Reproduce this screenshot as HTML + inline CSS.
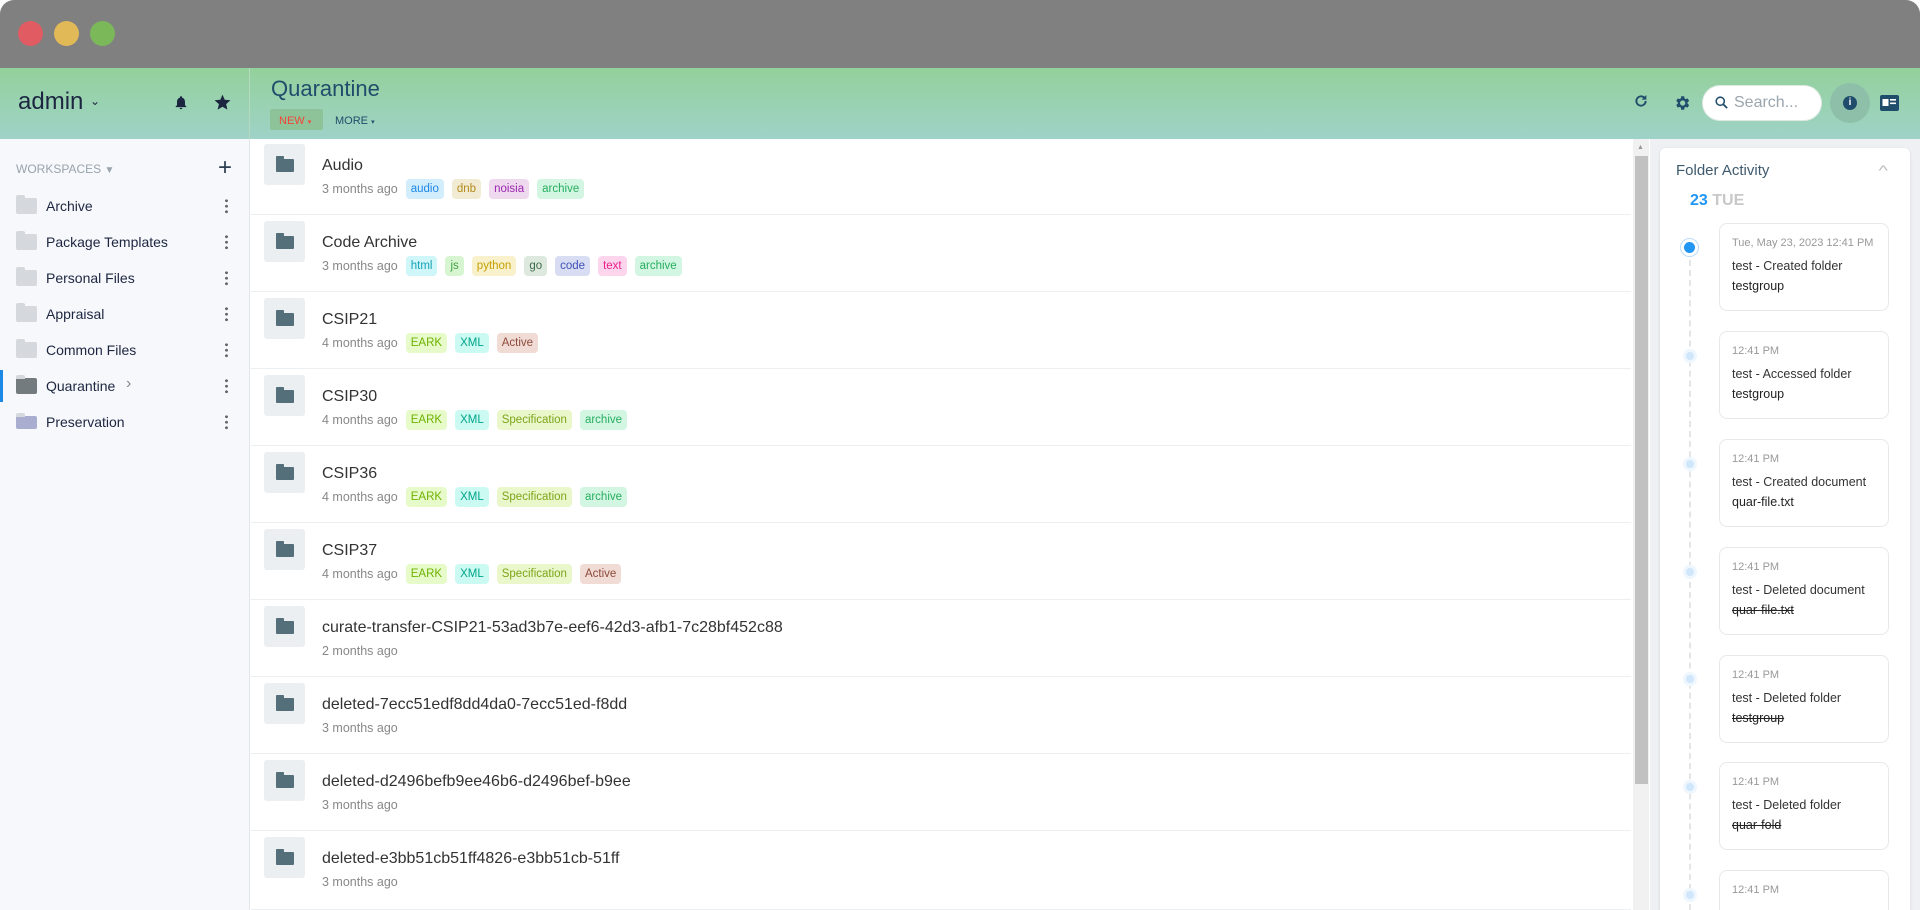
<!DOCTYPE html>
<html style="width:1920px;height:910px;overflow:hidden"><head><meta charset="utf-8"><style>
*{box-sizing:border-box;margin:0;padding:0}
body{width:1920px;height:910px;overflow:hidden;font-family:"Liberation Sans",sans-serif;background:#fff;position:relative;color:#333}
.abs{position:absolute}
.tb{left:0;top:0;width:1920px;height:68px;background:#808080;border-radius:14px 14px 0 0}
.dot{width:25px;height:25px;border-radius:50%;top:21px}
.hdr{left:0;top:68px;width:1920px;height:71px;background:linear-gradient(#93d19b,#9fd2c8)}
.side{left:0;top:139px;width:250px;height:771px;background:#f7f8fb;border-right:1px solid #e3e6ea}
.si{left:0;height:36px;width:250px;white-space:nowrap}
.si .fi{position:absolute;left:16px;top:10px;width:21px;height:16px;background:#d5d8dc;border-radius:2px}
.si .fi:before{content:"";position:absolute;left:0;top:-3px;width:9px;height:4px;background:#d5d8dc;border-radius:2px 2px 0 0}
.si span{position:absolute;left:46px;top:10px;font-size:14px;color:#1c2640}
.vd{position:absolute;left:225px;top:10px;width:3px;height:16px;background:radial-gradient(circle,#666 1.3px,transparent 1.6px) 0 0/3px 5.5px}
.row{left:251px;width:1380px;height:77px;border-bottom:1px solid #eceff2}
.row .ic{position:absolute;left:13px;top:6px;width:41px;height:41px;background:#eceff2;border-radius:3px}
.row .ic:after{content:"";position:absolute;left:12px;top:15px;width:18px;height:13px;background:#546e7a;border-radius:1px}
.row .ic:before{content:"";position:absolute;left:12px;top:12px;width:8px;height:4px;background:#546e7a;border-radius:1px 1px 0 0}
.row .t{position:absolute;left:71px;top:19px;font-size:16px;color:#333}
.row .s{position:absolute;left:71px;top:41px;font-size:12.5px;color:#888;display:flex;align-items:center;gap:8px;height:20px;white-space:nowrap}
.tag{font-size:11.5px;padding:0 5px;height:20px;line-height:20px;border-radius:4px}
.card{left:1719px;width:170px;background:#fff;border:1px solid #e6e8ea;border-radius:8px;height:88px}
.card .d{position:absolute;left:12px;top:13px;font-size:11px;color:#999}
.card .a{position:absolute;left:12px;top:35px;font-size:12.5px;color:#333}
.card .n{position:absolute;left:12px;top:55px;font-size:12.5px;color:#222}
.tl{left:1683px;width:14px;height:14px;border-radius:50%;background:#cfe6fb;border:3px solid #eef6fe}
</style></head><body>
<div class="abs tb"></div>
<div class="abs dot" style="left:18px;background:#e05c62"></div>
<div class="abs dot" style="left:54px;background:#e2b957"></div>
<div class="abs dot" style="left:90px;background:#7bb85a"></div>
<div class="abs hdr"></div>
<div class="abs" style="left:249px;top:68px;width:1px;height:71px;background:#b9d9bf"></div>
<div class="abs" style="left:18px;top:88px;font-size:24px;color:#1c2640">admin <span style="font-size:12px;vertical-align:4px">&#8964;</span></div>
<svg class="abs" style="left:173px;top:94px" width="16" height="17" viewBox="0 0 24 24"><path fill="#1c2640" d="M12 22a2 2 0 0 0 2-2h-4a2 2 0 0 0 2 2zm6-6V11c0-3.1-1.6-5.6-4.5-6.3V4a1.5 1.5 0 0 0-3 0v.7C7.6 5.4 6 7.9 6 11v5l-2 2v1h16v-1z"/></svg>
<svg class="abs" style="left:213px;top:93px" width="19" height="19" viewBox="0 0 24 24"><path fill="#1c2640" d="M12 17.3 18.2 21l-1.6-7L22 9.2l-7.2-.6L12 2 9.2 8.6 2 9.2 7.5 14l-1.7 7z"/></svg>
<div class="abs" style="left:271px;top:76px;font-size:22px;color:#1f4d6b">Quarantine</div>
<div class="abs" style="left:270px;top:109px;width:53px;height:21px;background:#8ec39a;border-radius:2px;font-size:11px;color:#f44336;padding:6px 0 0 9px;white-space:nowrap">NEW <span style="font-size:7px">▾</span></div>
<div class="abs" style="left:335px;top:115px;font-size:11px;color:#1f4d6b;white-space:nowrap">MORE <span style="font-size:7px">▾</span></div>
<svg class="abs" style="left:1633px;top:93px" width="16" height="16" viewBox="0 0 24 24"><path d="M19 12a7 7 0 1 1-2.1-5" fill="none" stroke="#1f4d6b" stroke-width="2.8"/><path d="M20 3v7h-7z" fill="#1f4d6b"/></svg>
<svg class="abs" style="left:1673px;top:94px" width="18" height="18" viewBox="0 0 24 24"><path fill="#1f4d6b" d="M19.4 13a7.5 7.5 0 0 0 0-2l2.1-1.6-2-3.5-2.5 1a7 7 0 0 0-1.7-1L14.9 3h-4l-.4 2.9a7 7 0 0 0-1.7 1l-2.5-1-2 3.5L6.4 11a7.5 7.5 0 0 0 0 2l-2.1 1.6 2 3.5 2.5-1a7 7 0 0 0 1.7 1l.4 2.9h4l.4-2.9a7 7 0 0 0 1.7-1l2.5 1 2-3.5zM12.9 15.5a3.5 3.5 0 1 1 0-7 3.5 3.5 0 0 1 0 7z"/></svg>
<div class="abs" style="left:1702px;top:85px;width:120px;height:36px;background:#fff;border-radius:18px;border:1px solid #dfe9e3"></div>
<svg class="abs" style="left:1714px;top:95px" width="15" height="15" viewBox="0 0 24 24"><circle cx="10" cy="10" r="6.5" fill="none" stroke="#1f4d6b" stroke-width="2.5"/><path d="M15 15l6 6" stroke="#1f4d6b" stroke-width="2.8"/></svg>
<div class="abs" style="left:1734px;top:94px;font-size:16px;color:#9aa5ad">Search...</div>
<div class="abs" style="left:1830px;top:83px;width:40px;height:40px;border-radius:50%;background:#8dbfa9"></div>
<div class="abs" style="left:1843px;top:96px;width:14px;height:14px;border-radius:50%;background:#1f4d6b;color:#fff;font-size:10px;font-weight:bold;text-align:center;line-height:14px">i</div>
<svg class="abs" style="left:1880px;top:95px" width="19" height="16" viewBox="0 0 19 16"><rect width="19" height="16" rx="2" fill="#1f4d6b"/><rect x="2.5" y="4" width="6" height="7" fill="#fff"/><rect x="10" y="4" width="6" height="1.6" fill="#fff"/><rect x="10" y="7.5" width="6" height="1.6" fill="#fff"/></svg>

<div class="abs side"></div>
<div class="abs" style="left:16px;top:162px;font-size:12px;color:#98a3ad">WORKSPACES <span style="font-size:10px">&#9660;</span></div>
<div class="abs" style="left:218px;top:154px;font-size:24px;color:#2c3e50;font-weight:300">+</div>
<div class="abs si" style="top:188px"><div class="fi"></div><span>Archive</span><div class="vd"></div></div>
<div class="abs si" style="top:224px"><div class="fi"></div><span>Package Templates</span><div class="vd"></div></div>
<div class="abs si" style="top:260px"><div class="fi"></div><span>Personal Files</span><div class="vd"></div></div>
<div class="abs si" style="top:296px"><div class="fi"></div><span>Appraisal</span><div class="vd"></div></div>
<div class="abs si" style="top:332px"><div class="fi"></div><span>Common Files</span><div class="vd"></div></div>
<div class="abs si" style="top:368px"><div style="position:absolute;left:0;top:2px;width:3px;height:32px;background:#1e88e5"></div><div class="fi" style="background:#747b7f"></div><span>Quarantine</span><span style="left:126px;color:#888;font-size:16px;top:7px">›</span><div class="vd"></div></div>
<div class="abs si" style="top:404px"><div class="fi" style="background:#a9aed0;height:13px;top:12px"></div><span>Preservation</span><div class="vd"></div></div>

<div class="abs row" style="top:138px"><div class="ic"></div><div class="t">Audio</div><div class="s">3 months ago <span class="tag" style="background:#d2edfb;color:#1e88e5">audio</span><span class="tag" style="background:#f2ebd3;color:#b38a1c">dnb</span><span class="tag" style="background:#efd9ef;color:#9c27b0">noisia</span><span class="tag" style="background:#d3f6e2;color:#27ae60">archive</span></div></div>
<div class="abs row" style="top:215px"><div class="ic"></div><div class="t">Code Archive</div><div class="s">3 months ago <span class="tag" style="background:#cff6f8;color:#17a2b8">html</span><span class="tag" style="background:#d8f5d2;color:#43a047">js</span><span class="tag" style="background:#f8f1cc;color:#c4a000">python</span><span class="tag" style="background:#dde9df;color:#3e6b48">go</span><span class="tag" style="background:#d9ddf3;color:#3f51b5">code</span><span class="tag" style="background:#fdd6ee;color:#e91e8c">text</span><span class="tag" style="background:#d3f6e2;color:#27ae60">archive</span></div></div>
<div class="abs row" style="top:292px"><div class="ic"></div><div class="t">CSIP21</div><div class="s">4 months ago <span class="tag" style="background:#e6fbc9;color:#6fb200">EARK</span><span class="tag" style="background:#cbfaf2;color:#00a58a">XML</span><span class="tag" style="background:#f1dbd5;color:#8d4b3b">Active</span></div></div>
<div class="abs row" style="top:369px"><div class="ic"></div><div class="t">CSIP30</div><div class="s">4 months ago <span class="tag" style="background:#e6fbc9;color:#6fb200">EARK</span><span class="tag" style="background:#cbfaf2;color:#00a58a">XML</span><span class="tag" style="background:#e9f7cb;color:#7da519">Specification</span><span class="tag" style="background:#d3f6e2;color:#27ae60">archive</span></div></div>
<div class="abs row" style="top:446px"><div class="ic"></div><div class="t">CSIP36</div><div class="s">4 months ago <span class="tag" style="background:#e6fbc9;color:#6fb200">EARK</span><span class="tag" style="background:#cbfaf2;color:#00a58a">XML</span><span class="tag" style="background:#e9f7cb;color:#7da519">Specification</span><span class="tag" style="background:#d3f6e2;color:#27ae60">archive</span></div></div>
<div class="abs row" style="top:523px"><div class="ic"></div><div class="t">CSIP37</div><div class="s">4 months ago <span class="tag" style="background:#e6fbc9;color:#6fb200">EARK</span><span class="tag" style="background:#cbfaf2;color:#00a58a">XML</span><span class="tag" style="background:#e9f7cb;color:#7da519">Specification</span><span class="tag" style="background:#f1dbd5;color:#8d4b3b">Active</span></div></div>
<div class="abs row" style="top:600px"><div class="ic"></div><div class="t">curate-transfer-CSIP21-53ad3b7e-eef6-42d3-afb1-7c28bf452c88</div><div class="s">2 months ago</div></div>
<div class="abs row" style="top:677px"><div class="ic"></div><div class="t">deleted-7ecc51edf8dd4da0-7ecc51ed-f8dd</div><div class="s">3 months ago</div></div>
<div class="abs row" style="top:754px"><div class="ic"></div><div class="t">deleted-d2496befb9ee46b6-d2496bef-b9ee</div><div class="s">3 months ago</div></div>
<div class="abs row" style="top:831px;height:79px"><div class="ic"></div><div class="t">deleted-e3bb51cb51ff4826-e3bb51cb-51ff</div><div class="s">3 months ago</div></div>

<div class="abs" style="left:1633px;top:139px;width:16px;height:771px;background:#f1f1f1"></div>
<div class="abs" style="left:1637px;top:144px;font-size:7px;color:#999">▲</div>
<div class="abs" style="left:1635px;top:156px;width:13px;height:628px;background:#c1c1c1"></div>

<div class="abs" style="left:1650px;top:139px;width:270px;height:771px;background:#eef0f3;overflow:hidden">
<div class="abs" style="left:10px;top:9px;width:250px;height:770px;background:#fff;border-radius:6px;box-shadow:0 1px 3px rgba(0,0,0,.1)"></div>
</div>
<div class="abs" style="left:1676px;top:162px;font-size:15px;color:#3f5a6e">Folder Activity</div>
<div class="abs" style="left:1880px;top:162px;font-size:14px;color:#bbb;transform:scaleX(1.4)">^</div>
<div class="abs" style="left:1690px;top:192px;font-size:16px;font-weight:bold;color:#2196f3">23 <span style="color:#c8c8c8">TUE</span></div>
<div class="abs" style="left:1689px;top:250px;width:0;height:660px;border-left:2px dashed #e3e5e7"></div>
<div class="abs" style="left:1680px;top:238px;width:19px;height:19px;border-radius:50%;border:1px solid #bcdcfb;background:#fff"></div>
<div class="abs" style="left:1684px;top:242px;width:11px;height:11px;border-radius:50%;background:#2196f3"></div>
<div class="abs tl" style="top:349px"></div>
<div class="abs tl" style="top:457px"></div>
<div class="abs tl" style="top:565px"></div>
<div class="abs tl" style="top:672px"></div>
<div class="abs tl" style="top:780px"></div>
<div class="abs tl" style="top:888px"></div>
<div class="abs card" style="top:223px"><div class="d">Tue, May 23, 2023 12:41 PM</div><div class="a">test - Created folder</div><div class="n">testgroup</div></div>
<div class="abs card" style="top:331px"><div class="d">12:41 PM</div><div class="a">test - Accessed folder</div><div class="n">testgroup</div></div>
<div class="abs card" style="top:439px"><div class="d">12:41 PM</div><div class="a">test - Created document</div><div class="n">quar-file.txt</div></div>
<div class="abs card" style="top:547px"><div class="d">12:41 PM</div><div class="a">test - Deleted document</div><div class="n" style="text-decoration:line-through">quar-file.txt</div></div>
<div class="abs card" style="top:655px"><div class="d">12:41 PM</div><div class="a">test - Deleted folder</div><div class="n" style="text-decoration:line-through">testgroup</div></div>
<div class="abs card" style="top:762px"><div class="d">12:41 PM</div><div class="a">test - Deleted folder</div><div class="n" style="text-decoration:line-through">quar-fold</div></div>
<div class="abs card" style="top:870px;height:40px;border-bottom:none;border-radius:8px 8px 0 0"><div class="d">12:41 PM</div></div>
</body></html>
